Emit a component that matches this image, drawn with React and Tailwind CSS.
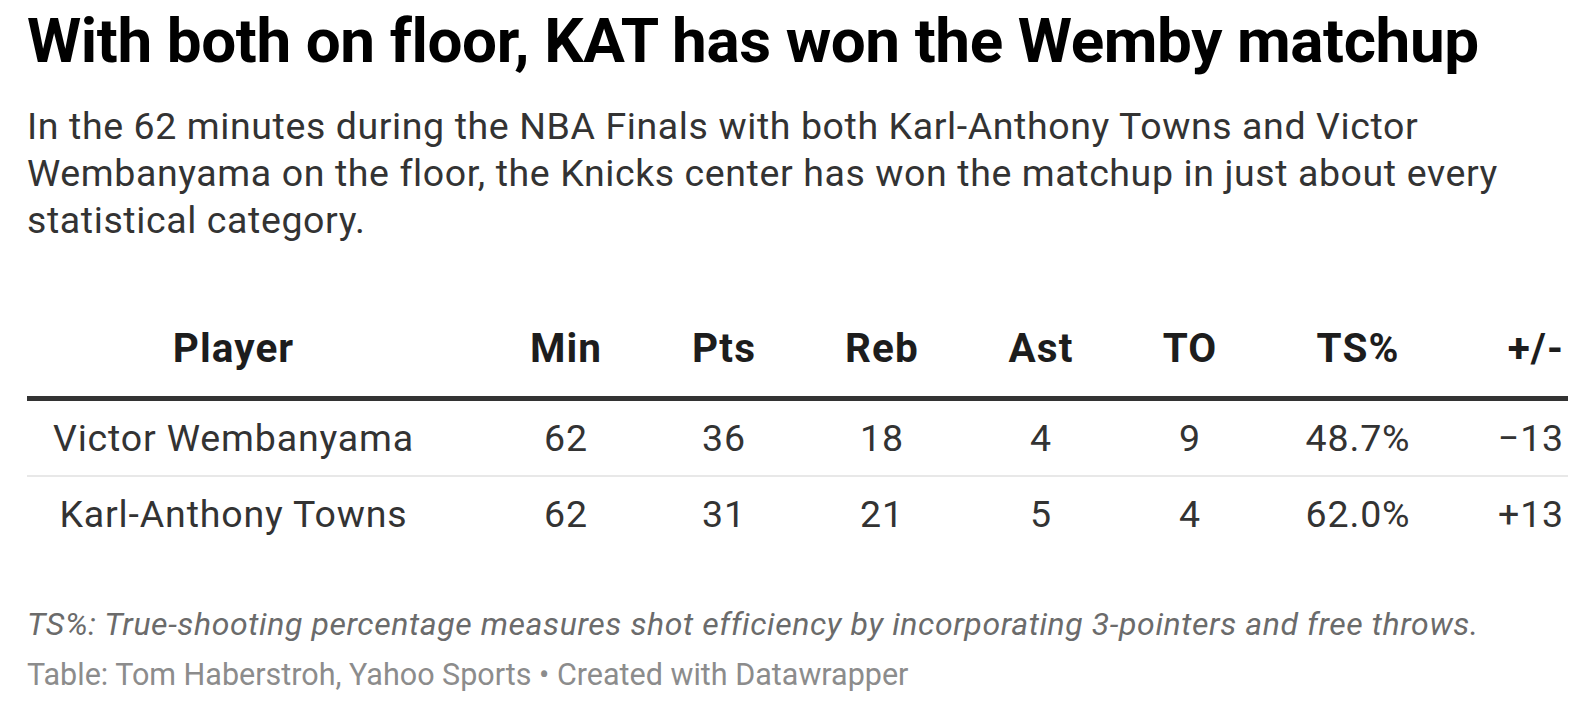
import React from "react";

const columns = [
  { key: "player", label: "Player" },
  { key: "min", label: "Min" },
  { key: "pts", label: "Pts" },
  { key: "reb", label: "Reb" },
  { key: "ast", label: "Ast" },
  { key: "to", label: "TO" },
  { key: "ts", label: "TS%" },
  { key: "pm", label: "+/-" },
];

const rows = [
  { player: "Victor Wembanyama", min: "62", pts: "36", reb: "18", ast: "4", to: "9", ts: "48.7%", pm: "\u221213" },
  { player: "Karl-Anthony Towns", min: "62", pts: "31", reb: "21", ast: "5", to: "4", ts: "62.0%", pm: "+13" },
];

// column layout for the table grid
const grid = "grid grid-cols-[460px_158px_158px_158px_160px_138px_198px_111px]";

const cellClass = (key) => {
  if (key === "player") return "text-center pr-[47px]";
  if (key === "pm") return "text-right pr-[4px]";
  return "text-center";
};

const App = () => {
  return (
    <div className="min-h-screen bg-white px-[27px] pt-[5px] font-['Roboto',sans-serif]">
      <h1 className="text-[62px] leading-[72px] font-bold tracking-[-0.4px] text-black whitespace-nowrap">
        With both on floor, KAT has won the Wemby matchup
      </h1>
      <p className="mt-[26px] text-[37.5px] leading-[47px] tracking-[0.6px] text-[#333333] max-w-[1500px]">
        In the 62 minutes during the NBA Finals with both Karl-Anthony Towns and Victor Wembanyama on the floor, the Knicks center has won the matchup in just about every statistical category.
      </p>

      <div className="mt-[81px] w-[1541px]">
        <div className={`${grid} border-b-[5px] border-[#333333] pb-[24px]`}>
          {columns.map((c) => (
            <div
              key={c.key}
              className={`${cellClass(c.key)} text-[40.5px] leading-[47px] font-bold tracking-[1.1px] text-[#1d1d1d]`}
            >
              {c.label}
            </div>
          ))}
        </div>
        {rows.map((r, i) => (
          <div
            key={r.player}
            className={`${grid} pt-[14px] pb-[14px] ${i === 0 ? "border-b-2 border-[#e8e8e8]" : ""}`}
          >
            {columns.map((c) => (
              <div
                key={c.key}
                className={`${cellClass(c.key)} text-[37.5px] leading-[46px] tracking-[0.85px] text-[#333333]`}
              >
                {r[c.key]}
              </div>
            ))}
          </div>
        ))}
      </div>

      <p className="mt-[53px] text-[32px] leading-[40px] italic tracking-[0.6px] text-[#6b6b6b] whitespace-nowrap">
        TS%: True-shooting percentage measures shot efficiency by incorporating 3-pointers and free throws.
      </p>
      <p className="mt-[11px] text-[30.5px] leading-[40px] text-[#8c8c8c] whitespace-nowrap">
        Table: Tom Haberstroh, Yahoo Sports • Created with Datawrapper
      </p>
    </div>
  );
};

export default App;
